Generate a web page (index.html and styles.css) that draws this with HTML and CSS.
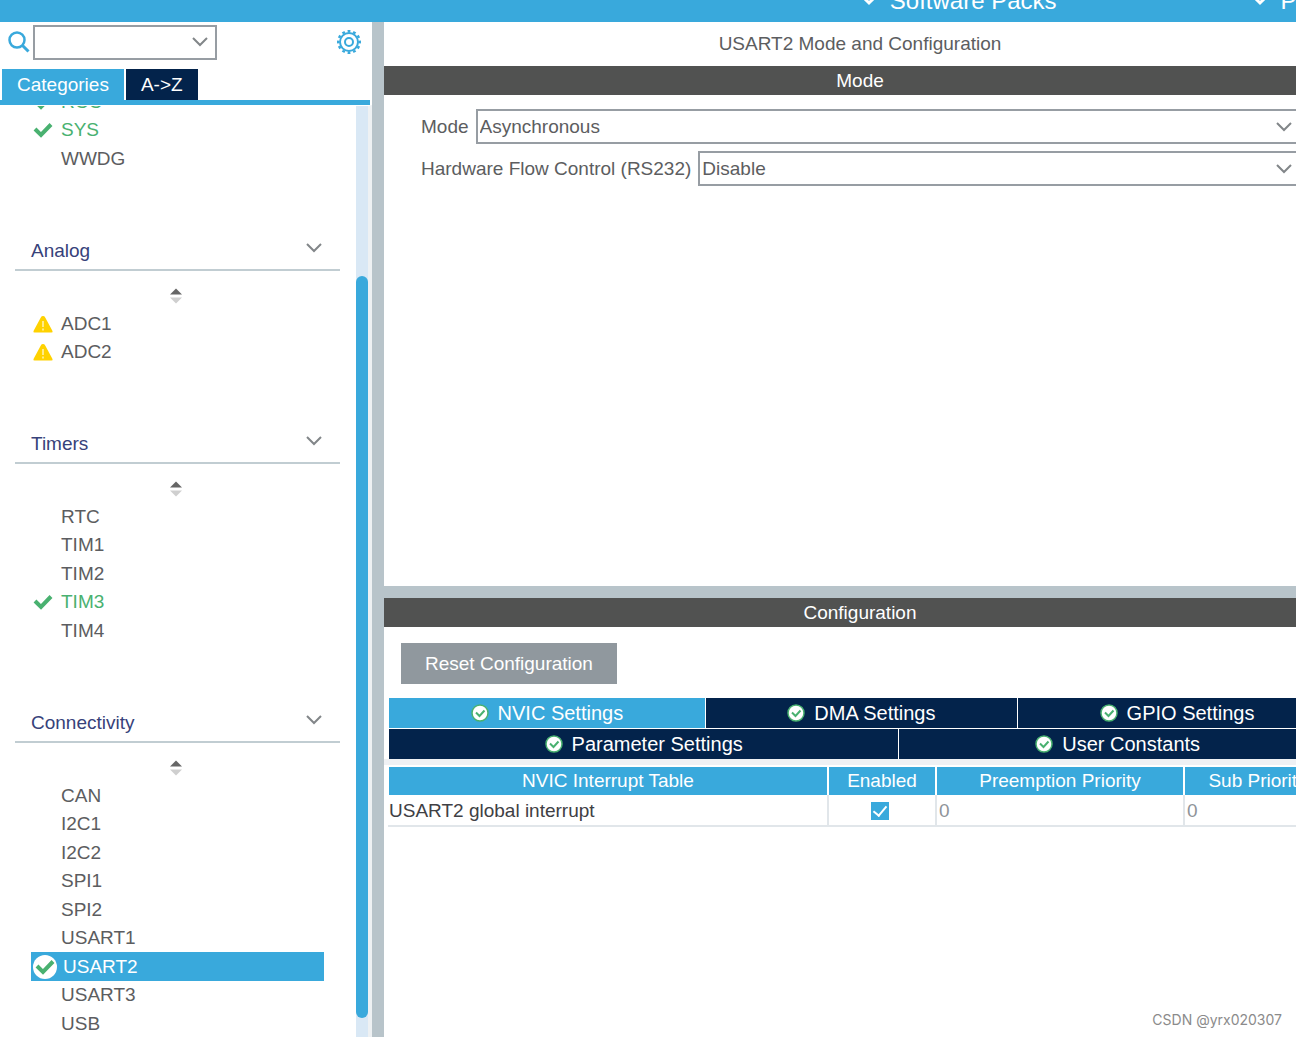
FILE: index.html
```html
<!DOCTYPE html>
<html lang="en">
<head>
<meta charset="utf-8">
<title>USART2 Mode and Configuration</title>
<link rel="stylesheet" href="styles.css">
</head>
<body>
<svg class="sprite" aria-hidden="true">
  <symbol id="chevron" viewBox="0 0 16 10"><path d="M1 1l7 7 7-7" fill="none" stroke="#828689" stroke-width="2"/></symbol>
  <symbol id="menu-chevron" viewBox="0 0 14 10"><path d="M1 1l6 6 6-6" fill="none" stroke="#fff" stroke-width="3"/></symbol>
  <symbol id="tick" viewBox="0 0 20 16"><path d="M2 7l6 6L18 2.500" fill="none" stroke="#49b170" stroke-width="4"/></symbol>
  <symbol id="warning" viewBox="0 0 20 18"><path d="M10 1q1.500 0 2.200 1.400L19.500 16q.5 1.500-1 1.500h-17q-1.500 0-1-1.500L7.800 2.400Q8.500 1 10 1z" fill="#ffd200"/><path d="M10 6v6M10 13.500v2" stroke="#fff3b8" stroke-width="1.500"/></symbol>
  <symbol id="sort" viewBox="0 0 12 16"><path d="M0 6.500L6 .5l6 6z" fill="#666"/><path d="M0 9.500h12l-6 6z" fill="#cfcfcf"/></symbol>
  <symbol id="ok" viewBox="0 0 18 18"><circle cx="9" cy="9" r="8" fill="#fff" stroke="#49b170" stroke-width="1.500"/><path d="M5 8.500l3.500 3.500 5-5.500" fill="none" stroke="#49b170" stroke-width="2"/></symbol>
</svg>

<nav class="topbar">
  <button class="menu" type="button"><svg class="menu-icon"><use href="#menu-chevron"/></svg>Software Packs</button>
  <button class="menu" type="button"><svg class="menu-icon"><use href="#menu-chevron"/></svg>Pinout</button>
</nav>

<div class="workspace">
  <aside class="sidebar">
    <div class="search">
      <svg class="search-icon" viewBox="0 0 22 22"><circle cx="9" cy="9" r="7.500" fill="none" stroke="#39a9dc" stroke-width="2.500"/><path d="M14 14l6.500 6.500" stroke="#39a9dc" stroke-width="3"/></svg>
      <div class="combo search-combo">
        <select aria-label="Search peripherals"><option></option></select>
        <svg class="chevron"><use href="#chevron"/></svg>
      </div>
      <button class="gear" type="button" aria-label="Settings">
        <svg viewBox="-13 -13 26 26"><g fill="none" stroke="#39a9dc"><circle r="4" stroke-width="2"/><circle r="9" stroke-width="2"/><circle r="10.800" stroke-width="2.400" pathLength="48" stroke-dasharray="2 2" stroke-dashoffset="1"/></g></svg>
      </button>
    </div>
    <div class="side-tabs">
      <button class="side-tab active" type="button">Categories</button>
      <button class="side-tab" type="button">A-&gt;Z</button>
    </div>
    <div class="browser">
      <div class="tree">
        <ul class="items first">
          <li class="used"><svg class="state"><use href="#tick"/></svg>RCC</li>
          <li class="used"><svg class="state"><use href="#tick"/></svg>SYS</li>
          <li>WWDG</li>
        </ul>
        <section>
          <h2 class="group">Analog<svg class="chevron"><use href="#chevron"/></svg></h2>
          <div class="sort"><svg><use href="#sort"/></svg></div>
          <ul class="items">
            <li><svg class="state"><use href="#warning"/></svg>ADC1</li>
            <li><svg class="state"><use href="#warning"/></svg>ADC2</li>
          </ul>
        </section>
        <section>
          <h2 class="group">Timers<svg class="chevron"><use href="#chevron"/></svg></h2>
          <div class="sort"><svg><use href="#sort"/></svg></div>
          <ul class="items">
            <li>RTC</li>
            <li>TIM1</li>
            <li>TIM2</li>
            <li class="used"><svg class="state"><use href="#tick"/></svg>TIM3</li>
            <li>TIM4</li>
          </ul>
        </section>
        <section>
          <h2 class="group">Connectivity<svg class="chevron"><use href="#chevron"/></svg></h2>
          <div class="sort"><svg><use href="#sort"/></svg></div>
          <ul class="items">
            <li>CAN</li>
            <li>I2C1</li>
            <li>I2C2</li>
            <li>SPI1</li>
            <li>SPI2</li>
            <li>USART1</li>
            <li class="selected"><span class="badge"><svg class="state"><use href="#tick"/></svg></span>USART2</li>
            <li>USART3</li>
            <li>USB</li>
          </ul>
        </section>
      </div>
      <div class="scrollbar"><div class="thumb"></div></div>
    </div>
  </aside>

  <main class="main">
    <section class="panel mode">
      <h1 class="title">USART2 Mode and Configuration</h1>
      <h2 class="bar">Mode</h2>
      <div class="fields">
        <div class="field">
          <label for="mode">Mode</label>
          <div class="combo">
            <select id="mode"><option>Asynchronous</option></select>
            <svg class="chevron"><use href="#chevron"/></svg>
          </div>
        </div>
        <div class="field">
          <label for="flow">Hardware Flow Control (RS232)</label>
          <div class="combo">
            <select id="flow"><option>Disable</option></select>
            <svg class="chevron"><use href="#chevron"/></svg>
          </div>
        </div>
      </div>
    </section>

    <section class="panel config">
      <h2 class="bar">Configuration</h2>
      <button class="reset" type="button">Reset Configuration</button>
      <div class="tabs">
        <div class="tab-row">
          <button class="tab active" type="button"><svg><use href="#ok"/></svg>NVIC Settings</button>
          <button class="tab" type="button"><svg><use href="#ok"/></svg>DMA Settings</button>
          <button class="tab" type="button"><svg><use href="#ok"/></svg>GPIO Settings</button>
        </div>
        <div class="tab-row">
          <button class="tab wide" type="button"><svg><use href="#ok"/></svg>Parameter Settings</button>
          <button class="tab medium" type="button"><svg><use href="#ok"/></svg>User Constants</button>
        </div>
      </div>
      <div class="table-area">
        <table>
          <colgroup><col class="col-name"><col class="col-enabled"><col class="col-preempt"><col></colgroup>
          <thead>
            <tr><th>NVIC Interrupt Table</th><th>Enabled</th><th>Preemption Priority</th><th>Sub Priority</th></tr>
          </thead>
          <tbody>
            <tr>
              <td class="name">USART2 global interrupt</td>
              <td class="enabled"><input class="check" type="checkbox" checked aria-label="Enable USART2 global interrupt"></td>
              <td>0</td>
              <td>0</td>
            </tr>
          </tbody>
        </table>
      </div>
    </section>
  </main>
</div>
<div class="credit">CSDN @yrx020307</div>
</body>
</html>
```
FILE: styles.css
```css
:root {
  --blue: #39a9dc;
  --navy: #03234b;
  --grey: #90989e;
  --bar: #515251;
  --split: #b8c4ca;
  --text: #5c5d60;
}

* {
  box-sizing: border-box;
}

body {
  margin: 0;
  height: 100vh;
  display: flex;
  flex-direction: column;
  overflow: hidden;
  background: #fff;
  color: var(--text);
  font: 19px/28px "Liberation Sans", Arial, sans-serif;
}

button,
select {
  font: inherit;
  border: 0;
  border-radius: 0;
  padding: 0;
}

h1,
h2 {
  margin: 0;
  font: inherit;
}

ul {
  margin: 0;
  padding: 0;
  list-style: none;
}

svg {
  display: block;
  flex: none;
}

.sprite {
  position: absolute;
  width: 0;
  height: 0;
}

/* Top menu */
.topbar {
  flex: none;
  display: flex;
  align-items: flex-end;
  gap: 196px;
  height: 22px;
  padding-left: 66.5%;
  overflow: hidden;
  background: var(--blue);
}

.menu {
  flex: none;
  display: flex;
  align-items: center;
  gap: 14px;
  height: 42px;
  background: none;
  color: #fff;
  font-size: 24px;
}

.menu-icon {
  width: 14px;
  height: 10px;
}

.workspace {
  flex: 1;
  min-height: 0;
  display: flex;
}

/* Sidebar */
.sidebar {
  flex: none;
  width: 372px;
  display: flex;
  flex-direction: column;
}

.search {
  display: flex;
  align-items: center;
  height: 47px;
  padding: 0 10px 7px 8px;
}

.search-icon {
  width: 22px;
  height: 22px;
  margin-right: 3px;
}

.combo {
  flex: 1;
  display: grid;
  align-items: center;
}

.search-combo {
  flex: none;
  width: 184px;
}

.combo select,
.combo .chevron {
  grid-area: 1 / 1;
}

.combo select {
  appearance: none;
  width: 100%;
  height: 35px;
  padding: 0 36px 0 2px;
  border: 2px solid #979da3;
  background: #fff;
  color: var(--text);
}

.chevron {
  width: 16px;
  height: 10px;
}

.combo .chevron {
  justify-self: end;
  margin-right: 9px;
  pointer-events: none;
}

.gear {
  width: 26px;
  height: 26px;
  margin-left: auto;
  background: none;
}

.side-tabs {
  display: flex;
  gap: 2px;
  height: 36px;
  margin-right: 2px;
  padding-left: 2px;
  border-bottom: 5px solid var(--blue);
}

.side-tab {
  padding: 0 15px;
  background: var(--navy);
  color: #fff;
}

.side-tab.active {
  background: var(--blue);
}

.browser {
  flex: 1;
  min-height: 0;
  display: flex;
  overflow: hidden;
  border-top: 1px solid #fff;
  border-right: 4px solid #eef1f3;
}

.tree {
  flex: 1;
  padding: 0 16px 0 15px;
}

.items {
  display: grid;
  grid-auto-rows: 29px 28px;
  margin: 0 16px;
}

/* The list is scrolled part way through its first row */
.items.first {
  margin-top: -19px;
}

.items li {
  display: flex;
  align-items: center;
  padding-left: 30px;
}

.items li:has(.state) {
  gap: 8px;
  padding-left: 2px;
}

.state {
  width: 20px;
  height: 18px;
}

.items .used {
  color: #49b170;
}

.items .selected:has(.state) {
  gap: 6px;
  background: var(--blue);
  color: #fff;
}

.badge {
  display: grid;
  place-items: center;
  width: 24px;
  height: 24px;
  border-radius: 50%;
  background: #fff;
}

.group {
  display: flex;
  align-items: center;
  justify-content: space-between;
  height: 98px;
  padding: 60px 18px 0 16px;
  border-bottom: 2px solid #c1cdd2;
  color: #37427a;
}

.group .chevron {
  margin-bottom: 6px;
}

.sort {
  display: grid;
  justify-content: center;
  align-content: center;
  height: 38px;
  padding: 12px 3px 0 0;
}

.sort svg {
  width: 12px;
  height: 16px;
}

.scrollbar {
  width: 12px;
  padding: 170px 0 19px;
  background: #d9e8f5;
}

.thumb {
  height: 100%;
  border-radius: 6px;
  background: var(--blue);
}

/* Main area: the panels run on past the right edge of the window */
.main {
  flex: 1;
  min-width: 0;
  display: flex;
  flex-direction: column;
  gap: 12px;
  padding-left: 12px;
  overflow: hidden;
  background: var(--split);
}

.panel {
  min-height: 0;
  margin-right: -40px;
  display: flex;
  flex-direction: column;
  background: #fff;
}

.mode {
  flex: 9;
}

.config {
  flex: 7;
}

.title {
  height: 44px;
  text-align: center;
  line-height: 44px;
}

.bar {
  flex: none;
  height: 29px;
  background: var(--bar);
  color: #fff;
  line-height: 29px;
  text-align: center;
}

.fields {
  display: grid;
  gap: 7px;
  padding: 14px 35px 0 37px;
}

.field {
  display: flex;
  align-items: center;
  gap: 7px;
}

.reset {
  align-self: flex-start;
  margin: 16px 17px 14px;
  padding: 0 24px;
  height: 41px;
  background: var(--grey);
  color: #fff;
}

.tabs {
  display: grid;
  gap: 1px;
  padding: 0 0 0 5px;
}

.tab-row {
  display: flex;
  gap: 1px;
}

.tab {
  flex: 1 1 auto;
  display: flex;
  align-items: center;
  justify-content: center;
  gap: 9px;
  height: 30px;
  background: var(--navy);
  color: #fff;
  font-size: 20px;
}

.tab.active {
  background: var(--blue);
}

.tab.wide {
  flex: 7 1 0;
}

.tab.medium {
  flex: 6 1 0;
}

.tab svg {
  width: 18px;
  height: 18px;
}

.table-area {
  padding: 8px 4px 0 3px;
  background: linear-gradient(#eff1f4 6px, #fff 6px);
}

table {
  width: 100%;
  table-layout: fixed;
  border-collapse: collapse;
}

.col-name {
  width: 440px;
}

.col-enabled {
  width: 108px;
}

.col-preempt {
  width: 248px;
}

th {
  height: 28px;
  padding: 0;
  border: solid #fff;
  border-width: 0 2px;
  background: var(--blue);
  color: #fff;
  font-weight: normal;
}

td {
  height: 31px;
  padding: 2px 2px 0;
  border: solid #e1e6ea;
  border-width: 0 2px 2px 0;
  color: #8f9499;
}

.name {
  padding-left: 1px;
  color: #404044;
}

.enabled {
  text-align: center;
}

.check {
  appearance: none;
  display: inline-grid;
  place-items: center;
  width: 18px;
  height: 18px;
  margin: 0 4px 3px 0;
  vertical-align: middle;
  background: var(--blue);
}

.check:checked::before {
  content: "";
  width: 6px;
  height: 11px;
  margin-bottom: 3px;
  border: solid #fff;
  border-width: 0 2px 2px 0;
  transform: rotate(40deg);
}

/* Watermark over the page */
.credit {
  position: absolute;
  right: 14px;
  bottom: 6px;
  color: #8b8b8b;
  font: 14px/22px Inter, sans-serif;
}
```
